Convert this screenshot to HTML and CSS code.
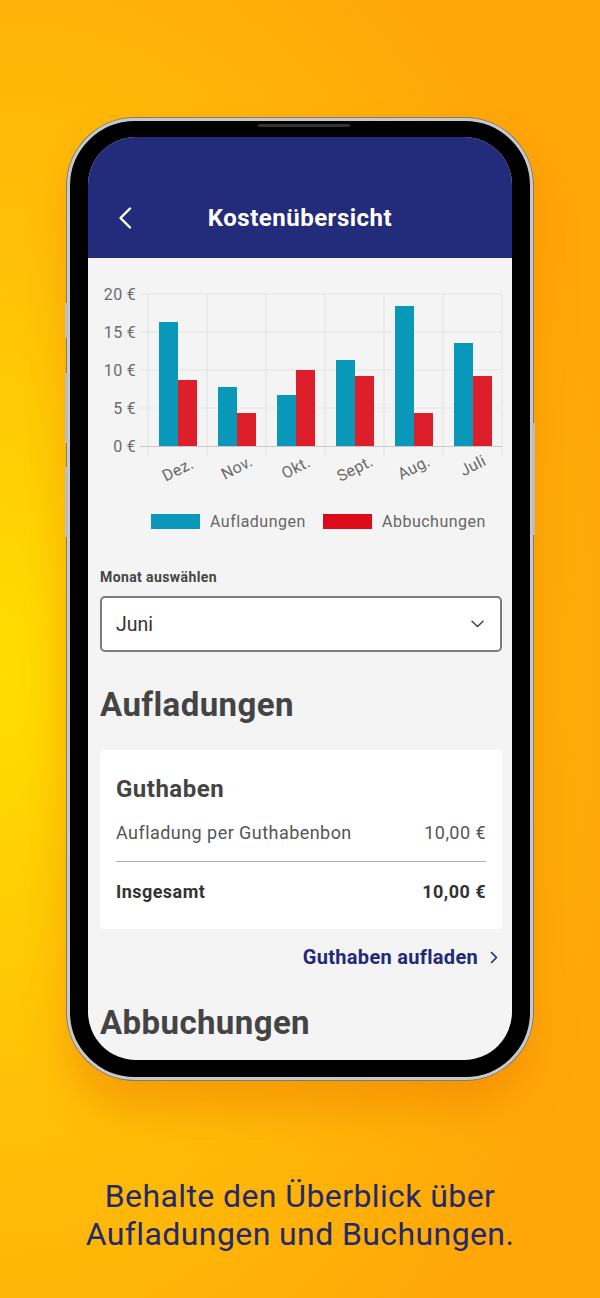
FILE: index.html
```html
<!DOCTYPE html>
<html>
<head>
  <meta charset="UTF-8">
  <meta name="viewport" content="width=device-width, initial-scale=1.0">
  <title>Kostenübersicht</title>
  <link rel="stylesheet" href="styles.css">
</head>
<body>
  <div class="stage">
    <!-- phone mockup -->
    <div class="phone">
      <span class="btn btn-mute"></span>
      <span class="btn btn-vol-up"></span>
      <span class="btn btn-vol-down"></span>
      <span class="btn btn-power"></span>
      <div class="screen">
        <div class="appbar">
          <div class="appbar-row">
            <svg class="back" width="14" height="22" viewBox="0 0 14 22">
              <path d="M12 1.5 L2.5 11 L12 20.5" fill="none" stroke="#fff" stroke-width="2.4" stroke-linecap="round" stroke-linejoin="round"/>
            </svg>
            <h1 class="title">Kostenübersicht</h1>
            <span class="spacer"></span>
          </div>
        </div>

        <div class="content">
          <!-- chart, coordinates are local to the content box -->
          <svg class="chart" width="404" height="270" viewBox="0 0 404 270">
            <g stroke="#e4e4e4" stroke-width="1">
              <line x1="40" y1="24" x2="402" y2="24"/>
              <line x1="40" y1="62" x2="402" y2="62"/>
              <line x1="40" y1="100" x2="402" y2="100"/>
              <line x1="40" y1="138" x2="402" y2="138"/>
              <line x1="48" y1="24" x2="48" y2="186"/>
              <line x1="107" y1="24" x2="107" y2="186"/>
              <line x1="166" y1="24" x2="166" y2="186"/>
              <line x1="225" y1="24" x2="225" y2="186"/>
              <line x1="284" y1="24" x2="284" y2="186"/>
              <line x1="343" y1="24" x2="343" y2="186"/>
              <line x1="402" y1="24" x2="402" y2="186"/>
            </g>
            <line x1="40" y1="176.5" x2="402" y2="176.5" stroke="#c8c8c8" stroke-width="1"/>

            <g class="ylabels" text-anchor="end">
              <text x="36" y="30">20 €</text>
              <text x="36" y="68">15 €</text>
              <text x="36" y="106">10 €</text>
              <text x="36" y="144">5 €</text>
              <text x="36" y="182">0 €</text>
            </g>

            <g fill="#0a98ba">
              <rect x="59" y="52" width="19" height="124"/>
              <rect x="118" y="117" width="19" height="59"/>
              <rect x="177" y="125" width="19" height="51"/>
              <rect x="236" y="90" width="19" height="86"/>
              <rect x="295" y="36" width="19" height="140"/>
              <rect x="354" y="73" width="19" height="103"/>
            </g>
            <g fill="#dd1f2b">
              <rect x="78" y="110" width="19" height="66"/>
              <rect x="137" y="143" width="19" height="33"/>
              <rect x="196" y="100" width="19" height="76"/>
              <rect x="255" y="106" width="19" height="70"/>
              <rect x="314" y="143" width="19" height="33"/>
              <rect x="373" y="106" width="19" height="70"/>
            </g>

            <g class="xlabels" text-anchor="middle">
              <text transform="translate(78 200) rotate(-27)" y="5">Dez.</text>
              <text transform="translate(137 198) rotate(-27)" y="5">Nov.</text>
              <text transform="translate(196 198) rotate(-27)" y="5">Okt.</text>
              <text transform="translate(255 199) rotate(-27)" y="5">Sept.</text>
              <text transform="translate(314 198) rotate(-27)" y="5">Aug.</text>
              <text transform="translate(373 196) rotate(-27)" y="5">Juli</text>
            </g>

            <rect x="51" y="244" width="49" height="15" fill="#0a98ba"/>
            <text class="legend" x="110" y="257">Aufladungen</text>
            <rect x="223" y="244" width="49" height="15" fill="#dc0a1a"/>
            <text class="legend" x="282" y="257">Abbuchungen</text>
          </svg>

          <label class="field-label">Monat auswählen</label>
          <div class="select">
            <span>Juni</span>
            <svg width="13" height="8" viewBox="0 0 13 8">
              <path d="M1 1.2 L6.5 6.5 L12 1.2" fill="none" stroke="#444" stroke-width="1.5" stroke-linecap="round" stroke-linejoin="round"/>
            </svg>
          </div>

          <h2 class="section-title">Aufladungen</h2>
          <div class="card">
            <h3 class="card-title">Guthaben</h3>
            <div class="row">
              <span>Aufladung per Guthabenbon</span>
              <span>10,00 €</span>
            </div>
            <div class="row total">
              <span>Insgesamt</span>
              <span>10,00 €</span>
            </div>
          </div>
          <div class="link-row">
            <a class="link">Guthaben aufladen</a>
            <svg width="8" height="13" viewBox="0 0 8 13">
              <path d="M1.5 1.5 L6.5 6.5 L1.5 11.5" fill="none" stroke="#1f2a78" stroke-width="1.6" stroke-linecap="round" stroke-linejoin="round"/>
            </svg>
          </div>

          <h2 class="section-title second">Abbuchungen</h2>
        </div>
      </div>
    </div>

    <p class="caption">Behalte den Überblick über<br>Aufladungen und Buchungen.</p>
  </div>
</body>
</html>
```

FILE: styles.css
```css
html, body {
  margin: 0;
  padding: 0;
}
body {
  width: 600px;
  height: 1298px;
  overflow: hidden;
  font-family: Roboto, "Liberation Sans", sans-serif;
  background: radial-gradient(ellipse 640px 900px at 0% 52%, #ffdd00 0%, #ffc107 45%, #ffa608 100%);
}
.stage {
  padding-top: 118px;
}

/* phone frame */
.phone {
  position: relative;
  margin: 0 auto;
  padding: 16px 18px 17px;
  width: 424px;
  height: 923px;
  border: 3px solid #c9c9c9;
  border-radius: 68px;
  background: #000;
  box-shadow: 0 0 0 1px #7d7d7d, 0 28px 40px rgba(235, 120, 0, 0.45);
}
.phone::before {
  content: "";
  position: absolute;
  top: 3px;
  left: 188px;
  width: 92px;
  height: 3px;
  border-radius: 2px;
  background: #333;
}
.btn {
  position: absolute;
  width: 3px;
  background: #bdbdbd;
  border-radius: 1px;
}
.btn-mute { left: -5px; top: 182px; height: 35px; }
.btn-vol-up { left: -5px; top: 252px; height: 70px; }
.btn-vol-down { left: -5px; top: 346px; height: 70px; }
.btn-power { right: -5px; top: 302px; height: 112px; }

.screen {
  height: 100%;
  border-radius: 48px;
  overflow: hidden;
  background: #f4f4f4;
}

/* app bar */
.appbar {
  height: 121px;
  background: #222c7b;
  display: flex;
  align-items: flex-end;
  padding-bottom: 12px;
  box-sizing: border-box;
}
.appbar-row {
  height: 56px;
  width: 100%;
  display: flex;
  align-items: center;
  padding: 0 30px;
}
.back {
  width: 14px;
  flex: none;
}
.spacer {
  width: 14px;
}
.title {
  flex: 1;
  margin: 0;
  text-align: center;
  color: #fff;
  font-size: 24px;
  font-weight: 700;
  letter-spacing: 0.5px;
}

/* content */
.content {
  padding: 12px 10px 0 12px;
}
.chart {
  display: block;
  overflow: visible;
}
.ylabels text,
.xlabels text {
  font-family: Roboto, sans-serif;
  font-size: 16px;
  fill: #6a6a6a;
  letter-spacing: 0.3px;
}
.legend {
  font-family: Roboto, sans-serif;
  font-size: 16px;
  fill: #666;
  letter-spacing: 0.5px;
}

.field-label {
  display: block;
  margin-top: 28px;
  font-size: 14px;
  line-height: 18px;
  font-weight: 700;
  color: #444;
  letter-spacing: 0.4px;
}
.select {
  margin-top: 10px;
  height: 56px;
  box-sizing: border-box;
  border: 2px solid #7b7b7b;
  border-radius: 5px;
  background: #fff;
  display: flex;
  align-items: center;
  justify-content: space-between;
  padding: 0 16px 0 14px;
  font-size: 19.5px;
  color: #333;
}

.section-title {
  margin: 33px 0 0;
  font-size: 33px;
  line-height: 40px;
  font-weight: 700;
  color: #444;
  letter-spacing: 0.4px;
}
.section-title.second {
  margin-top: 34px;
}

.card {
  margin-top: 25px;
  background: #fff;
  border-radius: 4px;
  padding: 25px 16px 25px;
}
.card-title {
  margin: 0;
  font-size: 24px;
  line-height: 28px;
  font-weight: 700;
  color: #444;
  letter-spacing: 0.5px;
}
.row {
  display: flex;
  justify-content: space-between;
  font-size: 18px;
  line-height: 24px;
  color: #555;
  margin-top: 18px;
  padding-bottom: 16px;
  border-bottom: 1px solid #b0b0b0;
  letter-spacing: 0.45px;
}
.row.total {
  margin-top: 0;
  padding: 18px 0 0;
  border-bottom: none;
  font-weight: 700;
  color: #333;
}

.link-row {
  margin-top: 16px;
  display: flex;
  justify-content: flex-end;
  align-items: center;
  gap: 12px;
  padding-right: 4px;
}
.link {
  font-size: 20px;
  line-height: 24px;
  font-weight: 700;
  color: #1f2a78;
  letter-spacing: 0.3px;
}

.caption {
  margin: 97px 0 0;
  text-align: center;
  font-size: 32px;
  line-height: 38px;
  color: #23296b;
  letter-spacing: 0.4px;
}
```
